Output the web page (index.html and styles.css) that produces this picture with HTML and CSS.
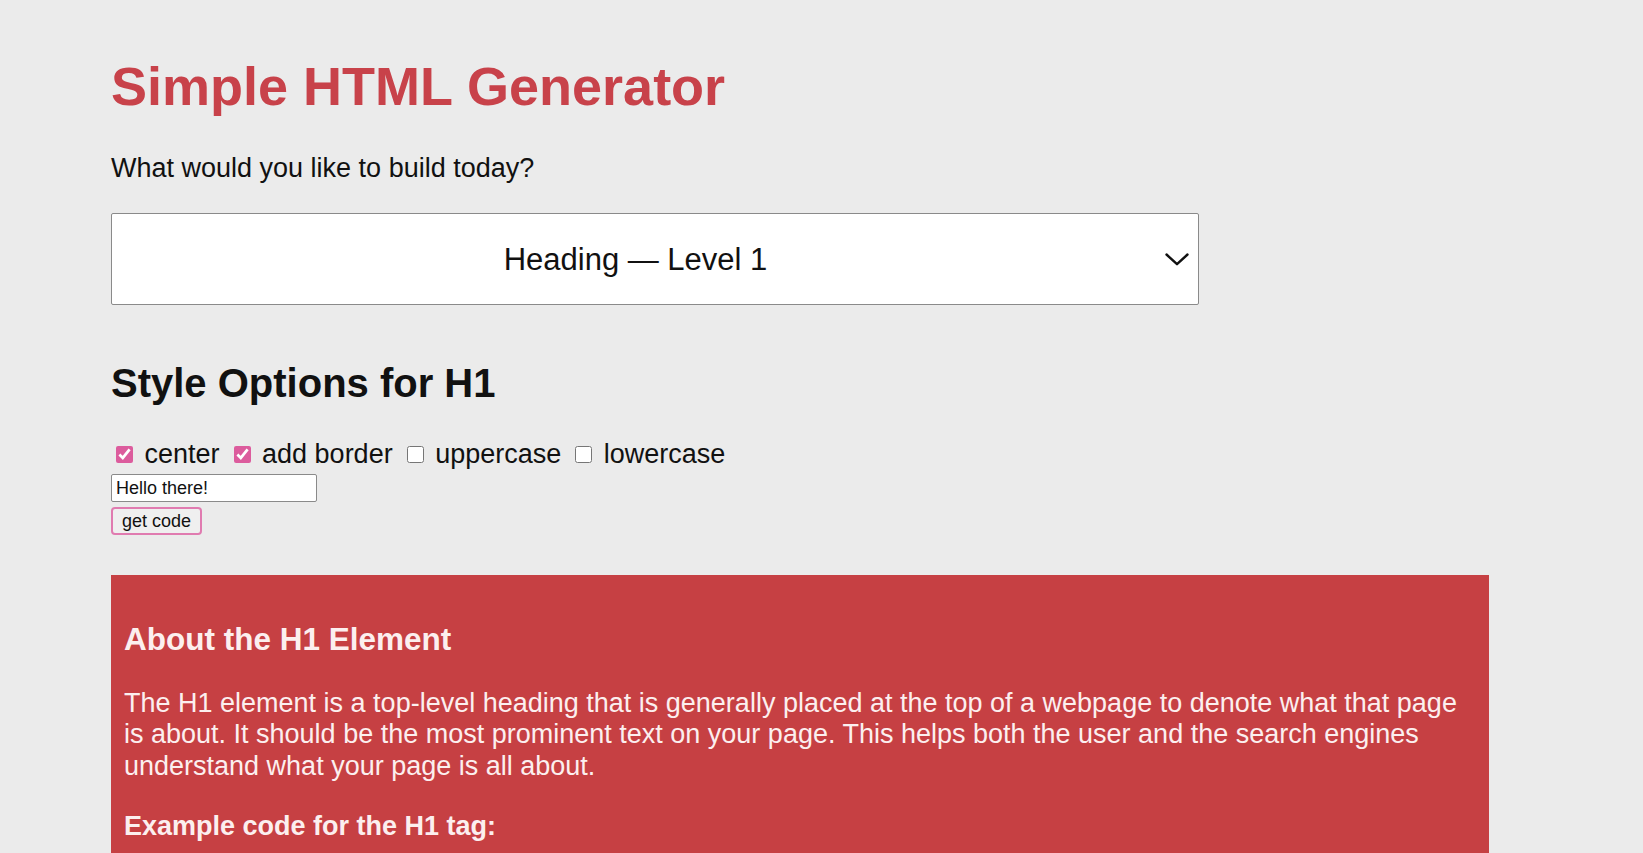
FILE: index.html
```html
<!DOCTYPE html>
<html lang="en">
<head>
<meta charset="utf-8">
<title>Simple HTML Generator</title>
<link rel="stylesheet" href="styles.css">
</head>
<body>
<main class="page">
  <h1 class="title">Simple HTML Generator</h1>
  <p class="prompt">What would you like to build today?</p>

  <div class="select-wrap">
    <select class="select" aria-label="Element">
      <option selected>Heading — Level 1</option>
      <option>Heading — Level 2</option>
      <option>Paragraph</option>
    </select>
    <svg class="chevron" width="24" height="13" viewBox="0 0 24 13" aria-hidden="true">
      <path d="M1.5 1.5 L12 11.2 L22.5 1.5" fill="none" stroke="#111" stroke-width="2.4" stroke-linecap="round" stroke-linejoin="round"/>
    </svg>
  </div>

  <h2 class="options-title">Style Options for H1</h2>

  <div class="checks">
    <label class="check"><input type="checkbox" checked> center</label>
    <label class="check"><input type="checkbox" checked> add border</label>
    <label class="check"><input type="checkbox"> uppercase</label>
    <label class="check"><input type="checkbox"> lowercase</label>
  </div>

  <input class="text-input" type="text" value="Hello there!">
  <button class="btn" type="button">get code</button>

  <section class="about">
    <h3 class="about-title">About the H1 Element</h3>
    <p class="about-text">The H1 element is a top-level heading that is generally placed at the top of a webpage to denote what that page is about. It should be the most prominent text on your page. This helps both the user and the search engines understand what your page is all about.</p>
    <h4 class="about-sub">Example code for the H1 tag:</h4>
  </section>
</main>
</body>
</html>
```

FILE: styles.css
```css
html, body {
  margin: 0;
  padding: 0;
  background: #ebebeb;
}

body {
  font-family: "Liberation Sans", Arial, Helvetica, sans-serif;
  color: #111;
}

.page {
  display: flex;
  flex-direction: column;
  align-items: flex-start;
  width: 1378px;
  margin-left: 111px;
  padding-top: 55px;
}

.title {
  margin: 0;
  font-size: 54px;
  line-height: 62px;
  font-weight: bold;
  color: #c8424a;
}

.prompt {
  margin: 36px 0 0;
  font-size: 27px;
  line-height: 31px;
}

.select-wrap {
  display: grid;
  margin-top: 29px;
  width: 1088px;
  height: 92px;
}

.select {
  grid-area: 1 / 1;
  appearance: none;
  -webkit-appearance: none;
  width: 100%;
  height: 100%;
  margin: 0;
  padding: 0 50px 0 11px;
  background: #fff;
  border: 1.5px solid #8a8a8a;
  border-radius: 2px;
  font-family: "Liberation Sans", Arial, Helvetica, sans-serif;
  font-size: 31px;
  color: #111;
  text-align: center;
  text-align-last: center;
}

.chevron {
  grid-area: 1 / 1;
  justify-self: end;
  align-self: center;
  margin-right: 10px;
  pointer-events: none;
}

.options-title {
  margin: 55px 0 0;
  font-size: 40px;
  line-height: 46px;
  font-weight: bold;
}

.checks {
  display: flex;
  align-items: center;
  gap: 14px;
  margin-top: 33px;
  padding-left: 5px;
  font-size: 27px;
  line-height: 31px;
}

.check {
  display: flex;
  align-items: center;
  white-space: pre;
}

.check input {
  width: 17px;
  height: 17px;
  margin: 0 4px 0 0;
  accent-color: #dc5c9d;
}

.text-input {
  box-sizing: border-box;
  width: 206px;
  height: 28px;
  margin: 4px 0 0;
  padding: 0 4px;
  background: #fff;
  border: 1.5px solid #8a8a8a;
  border-radius: 2px;
  font-family: "Liberation Sans", Arial, Helvetica, sans-serif;
  font-size: 18px;
  color: #111;
}

.btn {
  box-sizing: border-box;
  height: 28px;
  margin-top: 5px;
  padding: 0 9px;
  background: #efefef;
  border: 2px solid #e07bb0;
  border-radius: 4px;
  font-family: "Liberation Sans", Arial, Helvetica, sans-serif;
  font-size: 18px;
  color: #111;
}

.about {
  box-sizing: border-box;
  align-self: stretch;
  margin-top: 40px;
  padding: 46px 13px 40px;
  background: #c64043;
  color: #fcefef;
}

.about-title {
  margin: 0;
  font-size: 31.5px;
  line-height: 36px;
  font-weight: bold;
}

.about-text {
  margin: 31px 0 0;
  font-size: 27px;
  line-height: 31.4px;
}

.about-sub {
  margin: 29px 0 0;
  font-size: 27px;
  line-height: 31px;
  font-weight: bold;
}
```
